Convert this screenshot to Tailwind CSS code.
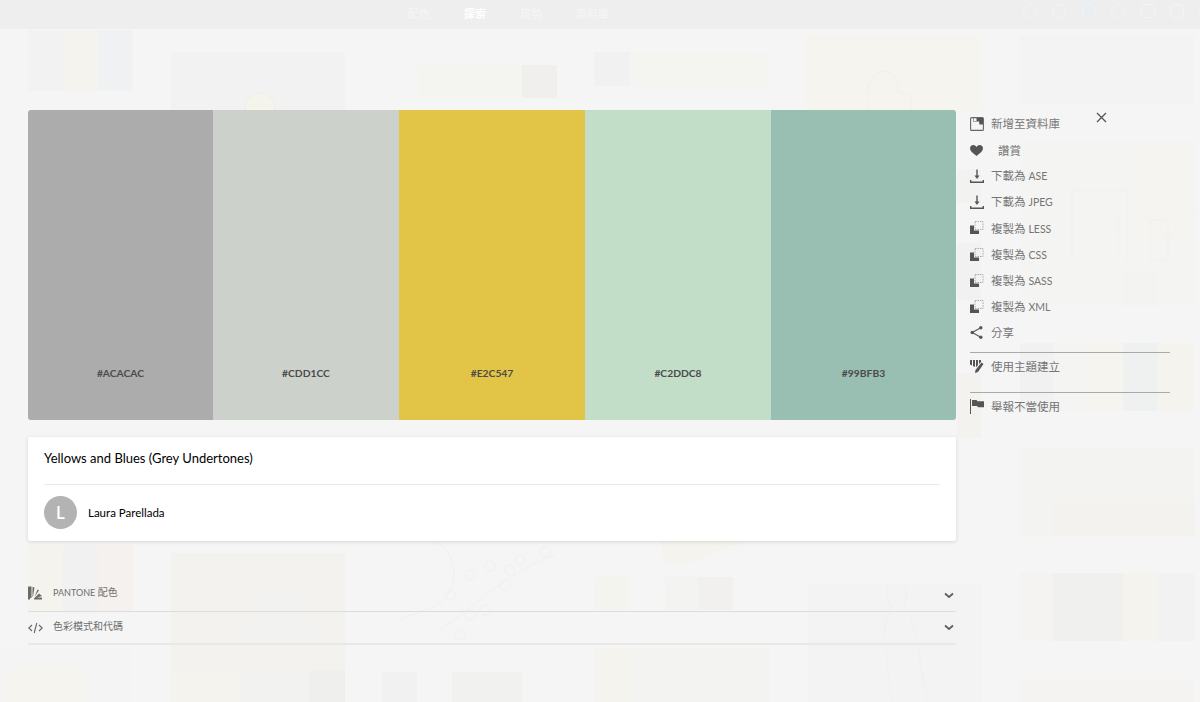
<!DOCTYPE html>
<html lang="zh-Hant">
<head>
<meta charset="utf-8">
<script src="https://cdn.jsdelivr.net/npm/@tailwindcss/browser@4"></script>
<title>Yellows and Blues</title>
</head>
<body class="m-0 bg-[#f5f5f5]">
<div class="relative w-[1200px] h-[702px] overflow-hidden bg-[#f5f5f5] font-['Lato','Noto_Sans_CJK_TC',sans-serif]">

  <!-- faded backdrop: the page behind the modal -->
  <div aria-hidden="true">
    <div class="absolute left-[28px] top-[30px] w-[105px] h-[61px] flex"><div class="w-[36px] bg-[#f2f2f2]"></div><div class="w-[34px] bg-[#f5f3ee]"></div><div class="flex-1 bg-[#eff1f3]"></div></div>
    <div class="absolute left-[171px] top-[52px] w-[174px] h-[58px] bg-[#f2f2f2]"></div>
    <div class="absolute left-[418px] top-[65px] w-[104px] h-[33px] bg-[#f4f4f0]"></div>
    <div class="absolute left-[522px] top-[65px] w-[35px] h-[33px] bg-[#f0efed]"></div>
    <div class="absolute left-[594px] top-[52px] w-[36px] h-[34px] bg-[#f1f1f2]"></div>
    <div class="absolute left-[630px] top-[52px] w-[137px] h-[34px] bg-[#f4f4f0]"></div>
    <div class="absolute left-[806px] top-[35px] w-[176px] h-[75px] bg-[#f5f4ef]"></div>
    <div class="absolute left-[1020px] top-[35px] w-[174px] h-[68px] bg-[#f3f3f3]"></div>
    <div class="absolute left-[1020px] top-[141px] w-[174px] h-[165px] bg-[#f4f4f3]"></div>
    <div class="absolute left-[1135px] top-[141px] w-[50px] h-[102px] bg-[#f5f4f0]"></div>
    <div class="absolute left-[1122px] top-[272px] w-[36px] h-[33px] bg-[#f3f3f2]"></div>
    <div class="absolute left-[1020px] top-[343px] w-[174px] h-[68px] flex"><div class="w-[34px] bg-[#f1f1f1]"></div><div class="w-[36px] bg-[#f4f4f2]"></div><div class="w-[33px] bg-[#f5f4ef]"></div><div class="w-[35px] bg-[#eff0f0]"></div><div class="flex-1 bg-[#f4f3ee]"></div></div>
    <div class="absolute left-[1020px] top-[448px] w-[174px] h-[88px] bg-[#f3f3f2]"></div>
    <div class="absolute left-[1054px] top-[503px] w-[140px] h-[33px] bg-[#f3f2ee]"></div>
    <div class="absolute left-[1020px] top-[573px] w-[174px] h-[68px] flex"><div class="w-[34px] bg-[#f4f3f1]"></div><div class="w-[69px] bg-[#f0f0ef]"></div><div class="w-[35px] bg-[#f4f3ee]"></div><div class="flex-1 bg-[#f2f2f2]"></div></div>
    <div class="absolute left-[1020px] top-[679px] w-[174px] h-[23px] bg-[#f4f3f1]"></div>
    <div class="absolute left-[957px] top-[170px] w-[24px] h-[33px] bg-[#f2f2f0]"></div>
    <div class="absolute left-[957px] top-[243px] w-[24px] h-[57px] bg-[#f1f1f1]"></div>
    <div class="absolute left-[957px] top-[373px] w-[24px] h-[65px] bg-[#f4f2ee]"></div>
    <div class="absolute left-[28px] top-[545px] w-[105px] h-[66px] flex"><div class="w-[35px] bg-[#f5f3ee]"></div><div class="w-[35px] bg-[#f1f1f1]"></div><div class="flex-1 bg-[#f4f1ee]"></div></div>
    <div class="absolute left-[0px] top-[650px] w-[132px] h-[52px] bg-[#f4f4f4]"></div>
    <div class="absolute left-[8px] top-[667px] w-[78px] h-[35px] bg-[#f5f4ee]"></div>
    <div class="absolute left-[171px] top-[553px] w-[174px] h-[149px] bg-[#f4f2ee]"></div>
    <div class="absolute left-[171px] top-[670px] w-[174px] h-[32px] flex"><div class="w-[69px] bg-[#f4f3ee]"></div><div class="w-[70px] bg-[#f2f2f1]"></div><div class="flex-1 bg-[#efefee]"></div></div>
    <div class="absolute left-[382px] top-[672px] w-[35px] h-[30px] bg-[#f1f1f1]"></div>
    <div class="absolute left-[452px] top-[672px] w-[70px] h-[30px] bg-[#f1f1f0]"></div>
    <div class="absolute left-[595px] top-[577px] w-[33px] h-[33px] bg-[#f4f4ee]"></div>
    <div class="absolute left-[665px] top-[577px] w-[33px] h-[33px] bg-[#f3f3f1]"></div>
    <div class="absolute left-[698px] top-[577px] w-[35px] h-[33px] bg-[#f1f0ef]"></div>
    <div class="absolute left-[595px] top-[648px] w-[33px] h-[54px] bg-[#f4f3ee]"></div>
    <div class="absolute left-[628px] top-[648px] w-[142px] h-[54px] bg-[#f3f3f1]"></div>
    <div class="absolute left-[808px] top-[584px] w-[174px] h-[118px] bg-[#f3f3f3]"></div>
    <svg class="absolute left-0 top-0" width="1200" height="702" fill="none" stroke="#f0f0ee" stroke-width="1">
      <circle cx="260" cy="108" r="15" fill="#f5f4ea" stroke="#eeeeee"/>
      <path d="M868 110v-20q0-8 8-16 8-6 16 0 8 8 6 18l10 2q6 10 2 16"/>
      <path d="M1072 260v-70h55v70M1095 205l25 25M1195 210l-28 28-28-28 28-28zM1118 215v45M1150 220h18v40h-18z"/>
      <circle cx="470" cy="575" r="5"/><circle cx="490" cy="566" r="5"/><circle cx="505" cy="585" r="5"/><circle cx="520" cy="560" r="5"/><circle cx="545" cy="552" r="5"/><circle cx="450" cy="595" r="5"/><circle cx="470" cy="615" r="5"/><circle cx="485" cy="610" r="5"/><circle cx="460" cy="635" r="5"/><circle cx="510" cy="570" r="5"/>
      <path d="M440 630c30-20 70-60 115-75M400 620c20-10 40-10 50-30 10-20 0-45-20-50"/>
      <path d="M889 582c-4 10-3 20 4 24-6 8-10 20-8 34l6 62M900 582c8 6 8 16 3 24 12 10 16 50 24 96"/>
      <path d="M660 541h85l-50 20-30 4z" fill="#f4f3ee" stroke="none"/>
      <path d="M262 590l55-5-10 30 10 25-85 5 30-30z" fill="#f2f2f1" stroke="none"/>
    </svg>
  </div>

  <!-- top bar -->
  <header class="relative h-[29px] bg-[#eeeeee] flex items-center text-[11px] text-[#f6f6f6]">
    <nav class="flex ml-[408px] gap-[34px]"><span>配色</span><span class="text-white font-bold">探索</span><span>趨勢</span><span>資料庫</span></nav>
    <div class="absolute left-[1023px] top-[4px] flex gap-[15.4px]" aria-hidden="true">
      <span class="w-[14px] h-[14px] rounded-full border-[1.5px] border-[#f4f4f4]"></span>
      <span class="w-[14px] h-[14px] rounded-full border-[1.5px] border-[#f4f4f4]"></span>
      <span class="w-[14px] h-[14px] rounded-full border-[1.5px] border-[#f4f4f4] bg-[#e8eef2]"></span>
      <span class="w-[14px] h-[14px] rounded-full border-[1.5px] border-[#f4f4f4]"></span>
      <span class="w-[14px] h-[14px] rounded-sm border-[1.5px] border-[#f4f4f4]"></span>
      <span class="w-[14px] h-[14px] rounded-sm border-[1.5px] border-[#f4f4f4]"></span>
      <span class="w-[14px] h-[14px] rounded-full border-[1.5px] border-[#f4f4f4]"></span>
    </div>
  </header>

  <!-- modal content -->
  <main class="relative flex pl-[28px] pt-[81px]">
    <section class="w-[928px]">
      <div class="h-[310px] flex rounded-[3px] overflow-hidden text-[10.3px] font-bold text-[#4b4b4b]">
        <div class="w-[185px] bg-[#acacac] flex items-end justify-center pb-[39px] leading-[15px]">#ACACAC</div>
        <div class="w-[186px] bg-[#cdd1cc] flex items-end justify-center pb-[39px] leading-[15px]">#CDD1CC</div>
        <div class="w-[186px] bg-[#e2c547] flex items-end justify-center pb-[39px] leading-[15px]">#E2C547</div>
        <div class="w-[186px] bg-[#c2ddc8] flex items-end justify-center pb-[39px] leading-[15px]">#C2DDC8</div>
        <div class="w-[185px] bg-[#99bfb3] flex items-end justify-center pb-[39px] leading-[15px]">#99BFB3</div>
      </div>

      <div class="mt-[17px] h-[104px] bg-white rounded-[3px] shadow-[0_1px_4px_rgba(0,0,0,0.12)] px-[16px]">
        <h1 class="h-[48px] flex items-center text-[13px] text-black font-normal border-b border-[#e8e8e8] pb-[3px]">Yellows and Blues (Grey Undertones)</h1>
        <div class="flex items-center gap-[11px] mt-[11px]">
          <div class="w-[33px] h-[33px] rounded-full bg-[#b3b3b3] flex items-center justify-center text-white text-[17px] font-semibold">L</div>
          <span class="text-[11.5px] text-black">Laura Parellada</span>
        </div>
      </div>

      <div class="mt-[35px] text-[#6e6e6e] text-[10px]">
        <div class="relative h-[36px] border-b border-[#dcdcdc] flex items-center pb-[3px]">
          <svg class="w-[14px] h-[14px] mr-[11px] mt-[2px]" viewBox="0 0 14 14" fill="#6a6a6a"><path d="M0 .5h3.500V12H2v1.500H0zM4.500 1l2 .5L5 10.500l-.5.5zM6.500 11L9.500 3.500l1.500.8zM6 13.500v-1L11 7.500l3 2.500-5 1.500h5v2z"/></svg>
          <span><span class="text-[9px]">PANTONE</span> 配色</span>
          <svg class="ml-auto mr-[2px] mt-[6px] w-[10px] h-[7px]" viewBox="0 0 10 7" fill="none" stroke="#606060" stroke-width="1.800"><path d="M1 1.500l4 3.500 4-3.500"/></svg>
        </div>
        <div class="h-[33px] border-b-2 border-[#e8e8e8] flex items-center pb-[2px]">
          <svg class="w-[15px] h-[12px] mr-[10px] mt-[2px]" viewBox="0 0 15 12" fill="none" stroke="#666666" stroke-width="1.100"><path d="M4 3L.8 6 4 9M11 3l3.200 3L11 9M8.800 1L6.200 11"/></svg>
          <span>色彩模式和代碼</span>
          <svg class="ml-auto mr-[2px] mt-[2px] w-[10px] h-[7px]" viewBox="0 0 10 7" fill="none" stroke="#606060" stroke-width="1.800"><path d="M1 1.500l4 3.500 4-3.500"/></svg>
        </div>
      </div>
    </section>

    <aside class="relative w-[200px] ml-[14px] text-[11.5px] text-[#757575]">
      <button class="absolute left-[126px] top-[2px] w-[11px] h-[11px]" aria-label="關閉">
        <svg viewBox="0 0 11 11" class="w-[11px] h-[11px]" fill="none" stroke="#555555" stroke-width="1.300"><path d="M1 1l9 9M10 1l-9 9"/></svg>
      </button>
      <ul class="pt-[1px]">
        <li class="h-[26.1px] flex items-center gap-[7px]">
          <svg class="w-[14px] h-[14px]" viewBox="0 0 14 14"><rect x=".6" y=".6" width="12.800" height="12.800" rx="1" fill="none" stroke="#666" stroke-width="1.100"/><path d="M3.500 1v3.500M3.500 4.500h3" stroke="#888" stroke-width=".8" fill="none"/><path d="M6.500 1H13v6.500H9.500l-.5-3H6.500z" fill="#555"/></svg><span>新增至資料庫</span>
        </li>
        <li class="h-[26.1px] flex items-center">
          <svg class="w-[13px] h-[11px] mr-[15px]" viewBox="0 0 13 11" fill="#555"><path d="M6.500 11C2.500 8 0 6 0 3.300 0 1.300 1.500 0 3.300 0c1.300 0 2.500.7 3.200 2C7.200.7 8.400 0 9.700 0 11.500 0 13 1.300 13 3.300 13 6 10.500 8 6.500 11z"/></svg><span>讚賞</span>
        </li>
        <li class="h-[26.1px] flex items-center gap-[7px]">
          <svg class="w-[14px] h-[14px]" viewBox="0 0 14 14" fill="none" stroke="#555" stroke-width="1.400"><path d="M7 .5v7"/><path d="M4.500 6.500h5L7 10z" fill="#555" stroke="none"/><path d="M.7 11v2.300h12.600V11"/></svg><span>下載為 <span class="text-[10.5px]">ASE</span></span>
        </li>
        <li class="h-[26.1px] flex items-center gap-[7px]">
          <svg class="w-[14px] h-[14px]" viewBox="0 0 14 14" fill="none" stroke="#555" stroke-width="1.400"><path d="M7 .5v7"/><path d="M4.500 6.500h5L7 10z" fill="#555" stroke="none"/><path d="M.7 11v2.300h12.600V11"/></svg><span>下載為 <span class="text-[10.5px]">JPEG</span></span>
        </li>
        <li class="h-[26.1px] flex items-center gap-[7px]">
          <svg class="w-[14px] h-[14px]" viewBox="0 0 14 14"><path d="M0 4.500h4v5h5V13H0z" fill="#555"/><rect x="5" y=".5" width="8" height="8" fill="none" stroke="#aaa" stroke-dasharray="1.500 1"/></svg><span>複製為 <span class="text-[10.5px]">LESS</span></span>
        </li>
        <li class="h-[26.1px] flex items-center gap-[7px]">
          <svg class="w-[14px] h-[14px]" viewBox="0 0 14 14"><path d="M0 4.500h4v5h5V13H0z" fill="#555"/><rect x="5" y=".5" width="8" height="8" fill="none" stroke="#aaa" stroke-dasharray="1.500 1"/></svg><span>複製為 <span class="text-[10.5px]">CSS</span></span>
        </li>
        <li class="h-[26.1px] flex items-center gap-[7px]">
          <svg class="w-[14px] h-[14px]" viewBox="0 0 14 14"><path d="M0 4.500h4v5h5V13H0z" fill="#555"/><rect x="5" y=".5" width="8" height="8" fill="none" stroke="#aaa" stroke-dasharray="1.500 1"/></svg><span>複製為 <span class="text-[10.5px]">SASS</span></span>
        </li>
        <li class="h-[26.1px] flex items-center gap-[7px]">
          <svg class="w-[14px] h-[14px]" viewBox="0 0 14 14"><path d="M0 4.500h4v5h5V13H0z" fill="#555"/><rect x="5" y=".5" width="8" height="8" fill="none" stroke="#aaa" stroke-dasharray="1.500 1"/></svg><span>複製為 <span class="text-[10.5px]">XML</span></span>
        </li>
        <li class="h-[26.1px] flex items-center gap-[8px]">
          <svg class="w-[13px] h-[13px]" viewBox="0 0 13 13" fill="#555"><circle cx="2.200" cy="6.500" r="1.700"/><circle cx="10.800" cy="1.800" r="1.700"/><circle cx="10.800" cy="11.200" r="1.700"/><path d="M2.200 6.500L10.800 1.800M2.200 6.500L10.800 11.200" stroke="#555" stroke-width="1.100"/></svg><span>分享</span>
        </li>
      </ul>
      <div class="mt-[6px] border-t border-[#a9a9a9] h-[40px]">
        <div class="h-[28px] flex items-center gap-[7px]">
          <svg class="w-[14px] h-[13px]" viewBox="0 0 14 13" fill="#555"><path d="M0 0h2v5.500l-2-1zM3 0h2v7l-2-1zM6 0h2v5L6.500 7 6 6.800zM9 0h2v2L9 4z"/><path d="M11.500 2.500l2 1.500L8 12l-3 1 .5-3z"/></svg><span>使用主題建立</span>
        </div>
      </div>
      <div class="border-t border-[#a9a9a9]">
        <div class="h-[28px] flex items-center gap-[7px]">
          <svg class="w-[14px] h-[15px]" viewBox="0 0 14 15" fill="#555"><path d="M0 0h1v15H0z"/><path d="M2 1h4.500l1 1.200H14v6H8l-1-1.200H2z"/></svg><span>舉報不當使用</span>
        </div>
      </div>
    </aside>
  </main>
</div>
</body>
</html>
